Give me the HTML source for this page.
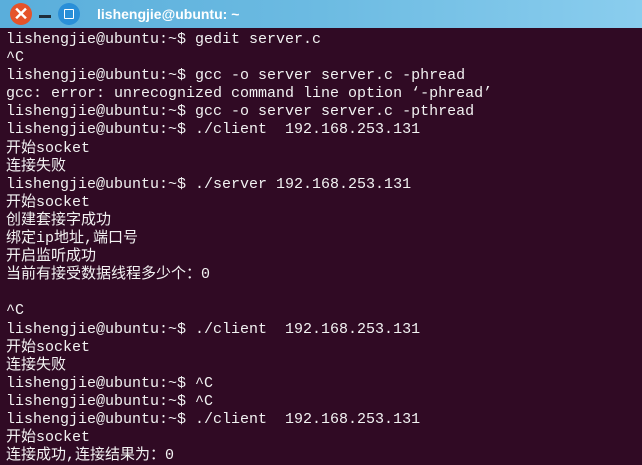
<!DOCTYPE html>
<html><head><meta charset="utf-8"><style>
html,body{margin:0;padding:0;width:642px;height:463px;overflow:hidden;background:#300a24}
.tb{position:absolute;left:0;top:0;width:642px;height:28px;background:linear-gradient(90deg,#5aaedb,#6cbbe2 50%,#8acdee);}
.x{position:absolute;left:10px;top:3px;width:22px;height:22px;border-radius:50%;background:#e5532a;color:#fff;font:bold 18px/22px "Liberation Sans",sans-serif;text-align:center}
.min{position:absolute;left:39px;top:15px;width:12px;height:3px;background:#1f2d3a}
.max{position:absolute;left:58px;top:3px;width:22px;height:22px;border-radius:50%;background:#2a8fd8}
.max:after{content:"";position:absolute;left:6px;top:6px;width:8px;height:8px;border:1.5px solid #fff;border-radius:1px}
.t{position:absolute;left:97px;top:4px;color:#fff;font:bold 14px/20px "Liberation Sans","DejaVu Sans",sans-serif}
pre{position:absolute;left:6px;top:31px;margin:0;color:#f2f2f2;font:15px/18.1px "Liberation Mono","Noto Sans CJK SC",monospace;white-space:pre}
</style></head><body>
<div class="tb"><div class="x">✕</div><div class="min"></div><div class="max"></div><div class="t">lishengjie@ubuntu: ~</div></div>
<pre>lishengjie@ubuntu:~$ gedit server.c
^C
lishengjie@ubuntu:~$ gcc -o server server.c -phread
gcc: error: unrecognized command line option ‘-phread’
lishengjie@ubuntu:~$ gcc -o server server.c -pthread
lishengjie@ubuntu:~$ ./client  192.168.253.131
开始socket
连接失败
lishengjie@ubuntu:~$ ./server 192.168.253.131
开始socket
创建套接字成功
绑定ip地址,端口号
开启监听成功
当前有接受数据线程多少个：0

^C
lishengjie@ubuntu:~$ ./client  192.168.253.131
开始socket
连接失败
lishengjie@ubuntu:~$ ^C
lishengjie@ubuntu:~$ ^C
lishengjie@ubuntu:~$ ./client  192.168.253.131
开始socket
连接成功,连接结果为：0</pre>
</body></html>
